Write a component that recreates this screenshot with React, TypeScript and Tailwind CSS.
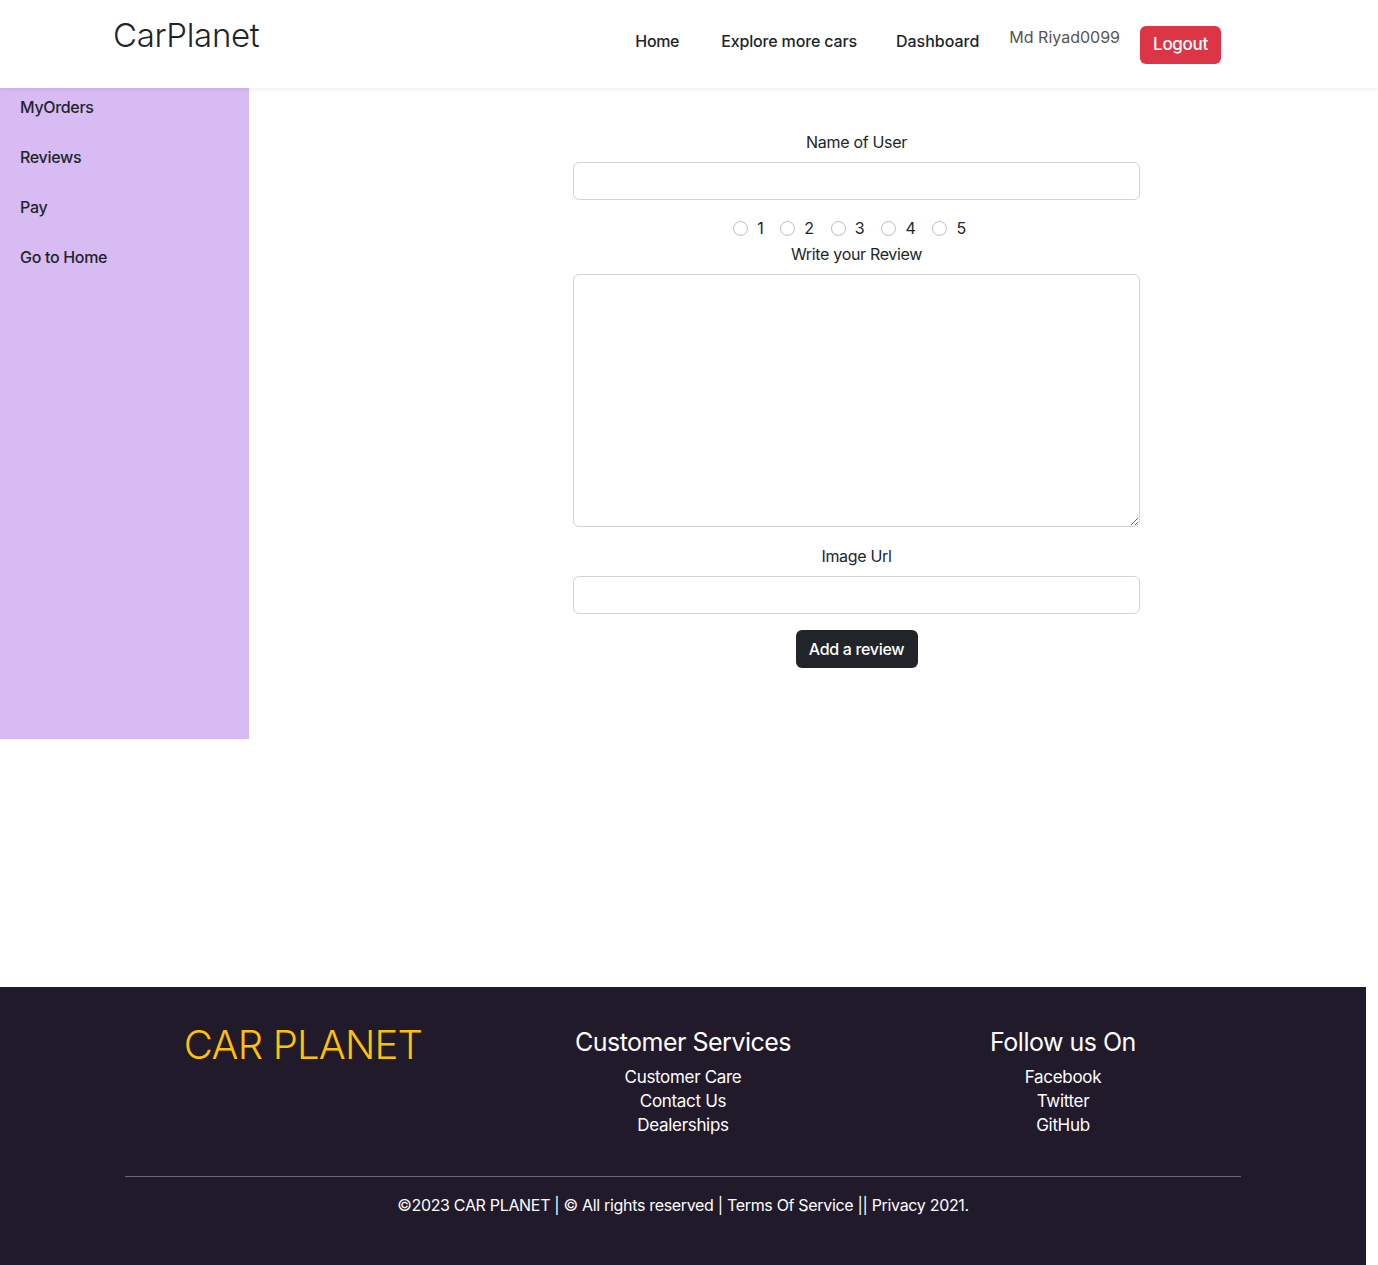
import React from 'react'

const sideLinks = ['MyOrders', 'Reviews', 'Pay', 'Go to Home']

const Navbar = () => (
  <nav className="flex h-[88px] w-full items-center bg-white shadow-[0_2px_4px_rgba(0,0,0,0.06)] relative z-10">
    <div className="flex w-[1140px] ml-[113px] items-center justify-between">
      <span className="text-[33px] font-light leading-none text-[#212529] tracking-[-0.01em] -mt-[17px]">
        CarPlanet
      </span>
      <div className="flex items-center mr-[32px] -mt-[9px]">
        <a className="text-[16px] font-medium text-[#212529] mr-[42px] mt-[2px]">Home</a>
        <a className="text-[16px] font-medium text-[#212529] mr-[39px] mt-[2px] tracking-[-0.01em]">Explore more cars</a>
        <a className="text-[16px] font-medium text-[#212529] mr-[30px] mt-[2px] tracking-[0em]">Dashboard</a>
        <span className="text-[16px] text-[#555] mr-[20px] -mt-[6px] tracking-[0em]">Md Riyad0099</span>
        <button className="h-[38px] w-[81px] rounded-[6px] bg-[#dc3545] text-[17px] font-medium text-white mt-[10px]">
          Logout
        </button>
      </div>
    </div>
  </nav>
)

const Field = ({ label }: { label: string }) => (
  <div className="flex flex-col items-center">
    <label className="mb-[8px] text-[16px] leading-[24px] text-[#212529]">{label}</label>
    <input className="h-[38px] w-full rounded-[6px] border border-[#ced4da] bg-white" />
  </div>
)

const ReviewForm = () => (
  <div className="flex w-[567px] flex-col pt-[42px]">
    <Field label="Name of User" />
    <div className="mt-[16px] flex items-center justify-center gap-[17px] pr-[14px] text-[16px] leading-[24px] text-[#212529]">
      {[1, 2, 3, 4, 5].map((n) => (
        <label key={n} className="flex items-center gap-[9px]">
          <span className="h-[15px] w-[15px] rounded-full border border-[#bbb] bg-white" />
          {n}
        </label>
      ))}
    </div>
    <div className="flex flex-col items-center">
      <label className="mb-[8px] mt-[2px] text-[16px] leading-[24px] text-[#212529]">Write your Review</label>
      <textarea className="h-[253px] w-full rounded-[6px] border border-[#ced4da] bg-white" />
    </div>
    <div className="mt-[17px]">
      <Field label="Image Url" />
    </div>
    <div className="mt-[16px] flex justify-center">
      <button className="h-[38px] w-[122px] rounded-[6px] bg-[#212529] text-[16px] font-medium text-white">
        Add a review
      </button>
    </div>
  </div>
)

const Footer = () => (
  <footer className="w-[1366px] bg-[#211a2b] pt-[32px] pb-[48px] text-white">
    <div className="ml-[113px] grid w-[1140px] grid-cols-3 text-center">
      <div className="pt-[2px]">
        <h2 className="text-[40px] font-light leading-[1.2] tracking-[-0.02em] text-[#ffc107]">CAR PLANET</h2>
      </div>
      <div className="pt-[8px]">
        <h3 className="text-[25px] leading-[1.2] tracking-[-0.02em]">Customer Services</h3>
        <ul className="mt-[8px] text-[17px] leading-[24px]">
          <li>Customer Care</li>
          <li>Contact Us</li>
          <li>Dealerships</li>
        </ul>
      </div>
      <div className="pt-[8px]">
        <h3 className="text-[25px] leading-[1.2] tracking-[-0.02em]">Follow us On</h3>
        <ul className="mt-[8px] text-[17px] leading-[24px]">
          <li>Facebook</li>
          <li>Twitter</li>
          <li>GitHub</li>
        </ul>
      </div>
    </div>
    <hr className="mx-[125px] mt-[39px] border-t border-[#6b6573]" />
    <p className="mt-[16px] text-center text-[16px] tracking-[-0.02em]">
      ©2023 CAR PLANET | © All rights reserved | Terms Of Service || Privacy 2021.
    </p>
  </footer>
)

const App = () => {
  return (
    <div className="min-h-screen bg-white font-['Inter','Liberation_Sans',sans-serif] tracking-[-0.02em]">
      <Navbar />
      <div className="flex">
        <aside className="flex h-[651px] w-[249px] flex-col gap-[28px] bg-[#d9bbf3] px-[20px] pt-[8px]">
          {sideLinks.map((l) => (
            <a key={l} className="text-[16px] font-medium leading-[22px] text-[#212529]">
              {l}
            </a>
          ))}
        </aside>
        <main className="flex flex-1 pl-[324px]">
          <ReviewForm />
        </main>
      </div>
      <div className="h-[248px]" />
      <Footer />
    </div>
  )
}

export default App
